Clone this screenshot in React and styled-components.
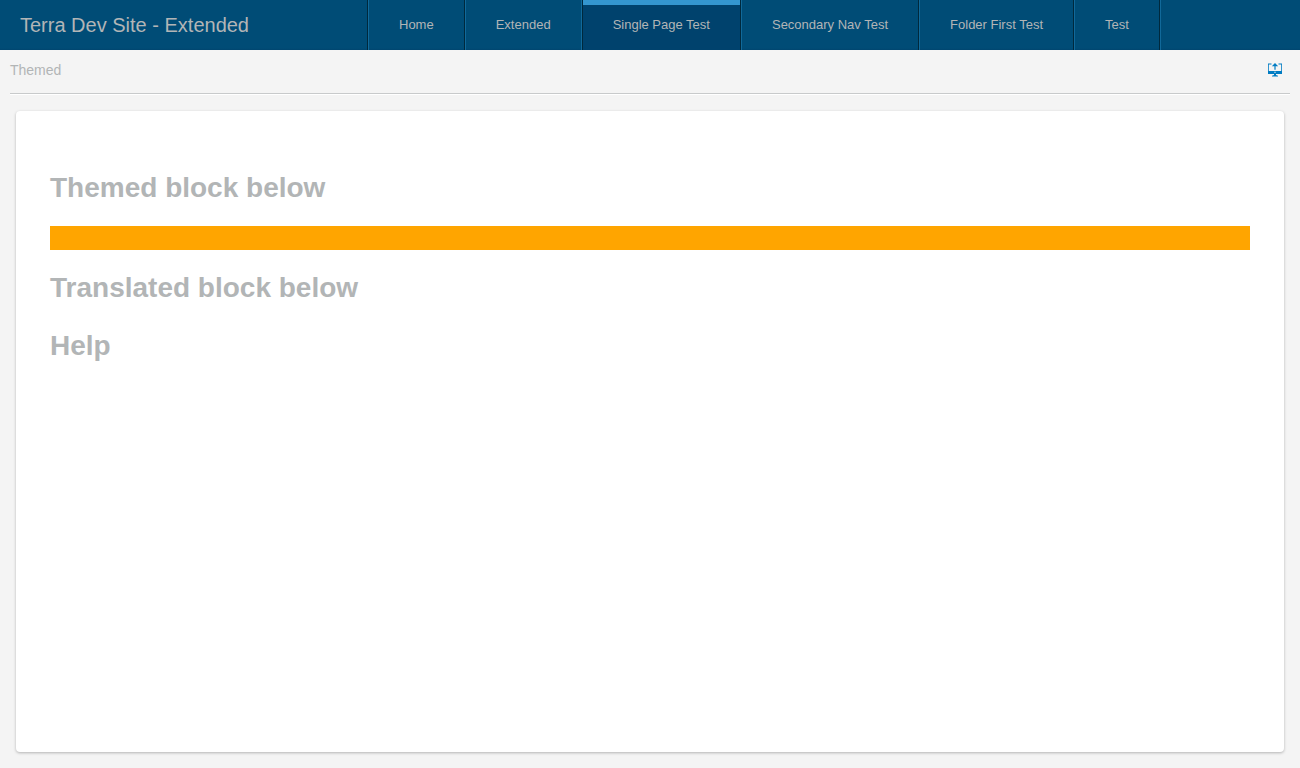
import React from "react";
import styled, { createGlobalStyle } from "styled-components";

const GlobalStyle = createGlobalStyle`
  *, *::before, *::after { box-sizing: border-box; }
  body {
    margin: 0;
    background: #f4f4f4;
    color: #b2b5b6;
    font-family: "Liberation Sans", Arial, sans-serif;
    font-size: 14px;
  }
`;

const Page = styled.div`
  display: flex;
  flex-direction: column;
  min-height: 100vh;
`;

const Header = styled.header`
  display: flex;
  height: 50px;
  background: linear-gradient(to top, #00456f, #004c76 2px);
`;

const Title = styled.div`
  flex: 0 0 367px;
  padding: 0 20px;
  font-size: 20px;
  line-height: 50px;
  white-space: nowrap;
`;

const Tabs = styled.nav`
  display: flex;
  border-left: 1px solid #00293d;
  border-right: 1px solid #11699a;
`;

const Tab = styled.a`
  padding: 0 30px;
  border-left: 1px solid ${(p) => (p.$active ? "#00293d" : "#11699a")};
  border-right: 1px solid ${(p) => (p.$beforeActive ? "#11699a" : "#00293d")};
  background: ${(p) =>
    p.$active
      ? "linear-gradient(to bottom, #3496cf 5px, #00426d 5px) padding-box"
      : "none"};
  color: inherit;
  font-size: 13px;
  line-height: 50px;
  text-decoration: none;
  white-space: nowrap;
`;

const SubHeader = styled.div`
  display: flex;
  align-items: center;
  justify-content: space-between;
  height: 44px;
  margin: 0 10px;
  padding: 0 8px 3px 0;
  border-bottom: 1px solid #c8cacb;
  box-shadow: 0 1px 0 #fff;
`;

const IconButton = styled.button`
  display: flex;
  padding: 0;
  border: 0;
  background: none;
  cursor: pointer;
`;

const Card = styled.main`
  flex: 1;
  margin: 17px 16px 16px;
  padding: 60px 34px;
  border-radius: 4px;
  background: #fff;
  box-shadow: 0 1px 3px rgba(0, 0, 0, 0.27);
`;

const Heading = styled.h1`
  margin: 0;
  font-size: 28px;
  line-height: 34px;
`;

const Sections = styled.div`
  display: flex;
  flex-direction: column;
  gap: 24px;
`;

const Section = styled.section`
  display: flex;
  flex-direction: column;
  gap: 21px;
`;

const ThemedBlock = styled.div`
  height: 24px;
  background: orange;
`;

const tabs = [
  "Home",
  "Extended",
  "Single Page Test",
  "Secondary Nav Test",
  "Folder First Test",
  "Test",
];

const activeIndex = 2;

function DisplayIcon() {
  return (
    <svg width="14" height="14" viewBox="0 0 14 14" fill="#007cc3" aria-hidden="true">
      <path d="M0 .5h3.500v.9H.8V8h12.400V1.400h-2.700V.5H14V11H0z" />
      <path d="M7 0l3.200 3.200H7.600v3.600H6.400V3.200H3.800z" />
      <path fill="#f4f4f4" d="M6.300 8.800h1.400v1H6.300z" />
      <path d="M6 11h2v1l2 .8v.8H4v-.8l2-.8z" />
    </svg>
  );
}

export default function App() {
  return (
    <Page>
      <GlobalStyle />
      <Header>
        <Title>Terra Dev Site - Extended</Title>
        <Tabs>
          {tabs.map((name, index) => (
            <Tab
              key={name}
              href="#"
              $active={index === activeIndex}
              $beforeActive={index === activeIndex - 1}
            >
              {name}
            </Tab>
          ))}
        </Tabs>
      </Header>
      <SubHeader>
        <span>Themed</span>
        <IconButton aria-label="Open in a modal">
          <DisplayIcon />
        </IconButton>
      </SubHeader>
      <Card>
        <Sections>
          <Section>
            <Heading>Themed block below</Heading>
            <ThemedBlock />
            <Heading>Translated block below</Heading>
          </Section>
          <Heading as="h2">Help</Heading>
        </Sections>
      </Card>
    </Page>
  );
}
